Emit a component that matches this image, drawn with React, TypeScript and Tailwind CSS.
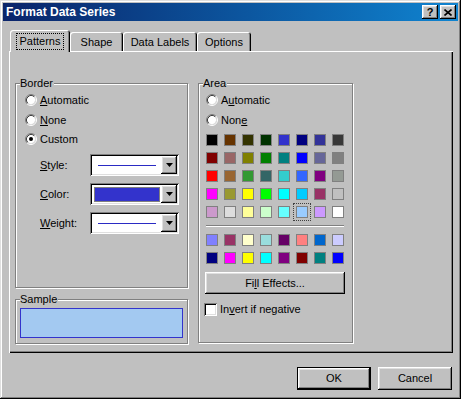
import type { ReactNode } from 'react'

const RAISED = 'shadow-[inset_-1px_-1px_#000,inset_1px_1px_#fff,inset_-2px_-2px_#808080,inset_2px_2px_#dfdfdf]'
const SUNKEN = 'shadow-[inset_1px_1px_#808080,inset_-1px_-1px_#fff,inset_2px_2px_#000,inset_-2px_-2px_#dfdfdf]'

const PALETTE = [
  ['#000000', '#663300', '#333300', '#003300', '#3333cc', '#000080', '#333399', '#383838'],
  ['#800000', '#996666', '#808000', '#008000', '#008080', '#0000ff', '#666699', '#808080'],
  ['#ff0000', '#996633', '#339933', '#336666', '#33cccc', '#3366ff', '#800080', '#949a94'],
  ['#ff00ff', '#999933', '#ffff00', '#00ff00', '#00ffff', '#00ccff', '#993366', '#c0c0c0'],
  ['#cc99cc', '#dddddd', '#ffff99', '#ccffcc', '#66ffff', '#99ccff', '#cc99ff', '#ffffff']
]
const EXTRA = [
  ['#8080ff', '#993366', '#ffffcc', '#99dddd', '#660066', '#ff8080', '#0066cc', '#ccccff'],
  ['#000080', '#ff00ff', '#ffff00', '#00ffff', '#800080', '#800000', '#008080', '#0000ff']
]

const TABS = [
  { label: 'Patterns', w: 'w-[60px]' },
  { label: 'Shape', w: 'w-[53px]' },
  { label: 'Data Labels', w: 'w-[74px]' },
  { label: 'Options', w: 'w-[54px]' }
]

export default function App() {
  return (
    <div
      className={`flex h-[399px] w-[461px] flex-col bg-[#c0c0c0] p-[3px] text-[11px] leading-[13px] text-black font-['Liberation_Sans',Arial,sans-serif] shadow-[inset_-1px_-1px_#000,inset_1px_1px_#dfdfdf,inset_-2px_-2px_#808080,inset_2px_2px_#fff]`}
    >
      <div className="flex h-[18px] items-center bg-linear-to-r from-[#0a246a] to-[#1084d0] pl-[3px] pr-[2px]">
        <span className="text-[12px] font-bold text-white">Format Data Series</span>
        <div className="ml-auto flex gap-[2px]">
          <TitleButton>
            <span className="text-[11px] font-bold leading-none">?</span>
          </TitleButton>
          <TitleButton>
            <svg width="8" height="7" viewBox="0 0 8 7">
              <path d="M0.5 0.5l7 6M7.5 0.5l-7 6" stroke="#000" strokeWidth="1.6" />
            </svg>
          </TitleButton>
        </div>
      </div>

      <div className="pl-[6px] pt-[9px]">
        <div className="relative z-10 flex h-[21px] items-end pl-[1px]">
          {TABS.map((t, i) => (
            <div
              key={t.label}
              className={`flex items-center justify-center rounded-t-[3px] bg-[#c0c0c0] shadow-[inset_1px_1px_#fff,inset_-1px_0_#000,inset_-2px_0_#808080] ${t.w} ${i === 0 ? '-mb-px h-[22px]' : 'h-[19px] pt-px'}`}
            >
              {i === 0 ? (
                <span className="border border-dotted border-black px-[3px] py-px">{t.label}</span>
              ) : (
                t.label
              )}
            </div>
          ))}
        </div>

        <div className="flex h-[302px] w-[444px] gap-[10px] pl-[6px] pt-[32px] shadow-[inset_1px_1px_#fff,inset_-1px_-1px_#000,inset_-2px_-2px_#808080]">
          <div className="flex flex-col gap-[11px]">
            <Group label="Border" className="h-[205px] w-[173px]">
              <div className="flex flex-col pl-[9px] pt-[8px]">
                <RadioRow>
                  <u>A</u>utomatic
                </RadioRow>
                <RadioRow className="mt-[4px]">
                  <u>N</u>one
                </RadioRow>
                <RadioRow className="mt-[3px]" checked>
                  Custom
                </RadioRow>
              </div>
              <div className="mt-[7px] flex flex-col gap-[7px] pl-[24px]">
                <FieldRow label={<><u>S</u>tyle:</>}>
                  <div className="ml-[6px] h-px w-[58px] bg-[#2b2bc4]" />
                </FieldRow>
                <FieldRow label={<><u>C</u>olor:</>}>
                  <div className="mb-px ml-[2px] mr-[1px] mt-[2px] flex-1 self-stretch border border-[#808080] bg-[#3333cc]" />
                </FieldRow>
                <FieldRow label={<><u>W</u>eight:</>}>
                  <div className="ml-[6px] h-px w-[58px] bg-[#2b2bc4]" />
                </FieldRow>
              </div>
            </Group>
            <Group label="Sample" className="h-[45px] w-[173px]">
              <div className="pl-[4px] pt-[8px]">
                <div className="h-[30px] w-[163px] border border-[#3333cc] bg-[#a3c9f1]" />
              </div>
            </Group>
          </div>

          <Group label="Area" className="h-[260px] w-[155px]">
            <div className="flex flex-col pl-[7px] pt-[8px]">
              <RadioRow>
                A<u>u</u>tomatic
              </RadioRow>
              <RadioRow className="mt-[4px]">
                Non<u>e</u>
              </RadioRow>
              <div className="mt-[6px] flex flex-col gap-[6px]">
                {PALETTE.map((row, r) => (
                  <Swatches key={r} colors={row} selected={r === 4 ? 5 : -1} />
                ))}
              </div>
              <div className="my-[7px] h-px w-[138px] bg-[#808080] shadow-[0_1px_#fff]" />
              <div className="mt-px flex flex-col gap-[6px]">
                {EXTRA.map((row, r) => (
                  <Swatches key={r} colors={row} selected={-1} />
                ))}
              </div>
              <button
                type="button"
                className={`-ml-px mt-[8px] flex h-[22px] w-[140px] items-center justify-center bg-[#c0c0c0] ${RAISED}`}
              >
                Fi<u>l</u>l Effects...
              </button>
              <div className="-ml-[2px] mt-[9px] flex items-center gap-[3px]">
                <div className={`h-[13px] w-[13px] bg-white ${SUNKEN}`} />
                <span>
                  In<u>v</u>ert if negative
                </span>
              </div>
            </div>
          </Group>
        </div>

        <div className="mt-[14px] flex w-[444px] justify-end gap-[7px] pr-[1px]">
          <button
            type="button"
            className={`h-[23px] w-[74px] border border-black bg-[#c0c0c0] ${RAISED}`}
          >
            OK
          </button>
          <button type="button" className={`h-[23px] w-[74px] bg-[#c0c0c0] ${RAISED}`}>
            Cancel
          </button>
        </div>
      </div>
    </div>
  )
}

function TitleButton({ children }: { children: ReactNode }) {
  return (
    <div className={`flex h-[14px] w-[16px] items-center justify-center bg-[#c0c0c0] ${RAISED}`}>
      {children}
    </div>
  )
}

function Group({ label, className, children }: { label: string; className: string; children?: ReactNode }) {
  return (
    <div className={`relative border border-[#808080] shadow-[inset_1px_1px_#fff,1px_1px_#fff] ${className}`}>
      <span className="absolute -top-[8px] left-[4px] bg-[#c0c0c0] pr-[1px] leading-[14px]">{label}</span>
      {children}
    </div>
  )
}

function Radio({ checked }: { checked?: boolean }) {
  return (
    <svg width="12" height="12" viewBox="0 0 12 12" className="shrink-0">
      <circle cx="6" cy="6" r="4.2" fill="#fff" />
      <path d="M2.11 9.89A5.5 5.5 0 0 1 9.89 2.11" fill="none" stroke="#808080" />
      <path d="M9.89 2.11A5.5 5.5 0 0 1 2.11 9.89" fill="none" stroke="#fff" />
      <path d="M2.82 9.18A4.5 4.5 0 0 1 9.18 2.82" fill="none" stroke="#404040" />
      <path d="M9.18 2.82A4.5 4.5 0 0 1 2.82 9.18" fill="none" stroke="#dfdfdf" />
      {checked && <circle cx="6" cy="6" r="2" fill="#000" />}
    </svg>
  )
}

function RadioRow({ children, checked, className = '' }: { children: ReactNode; checked?: boolean; className?: string }) {
  return (
    <div className={`flex h-[16px] items-center gap-[3px] ${className}`}>
      <Radio checked={checked} />
      <span>{children}</span>
    </div>
  )
}

function FieldRow({ label, children }: { label: ReactNode; children: ReactNode }) {
  return (
    <div className="flex items-center">
      <span className="w-[50px]">{label}</span>
      <div className={`flex h-[22px] w-[89px] bg-white p-[2px] ${SUNKEN}`}>
        <div className="flex flex-1 items-center">{children}</div>
        <div className={`flex h-[18px] w-[16px] items-center justify-center bg-[#c0c0c0] ${RAISED}`}>
          <svg width="7" height="4" viewBox="0 0 7 4">
            <path d="M0 0h7L3.5 4z" fill="#000" />
          </svg>
        </div>
      </div>
    </div>
  )
}

function Swatches({ colors, selected }: { colors: string[]; selected: number }) {
  return (
    <div className="flex gap-[6px]">
      {colors.map((c, i) => (
        <div
          key={i}
          className={`h-[12px] w-[12px] border border-[#808080] ${i === selected ? 'outline outline-offset-[2px] outline-dotted outline-[#404040]' : ''}`}
          style={{ backgroundColor: c }}
        />
      ))}
    </div>
  )
}
